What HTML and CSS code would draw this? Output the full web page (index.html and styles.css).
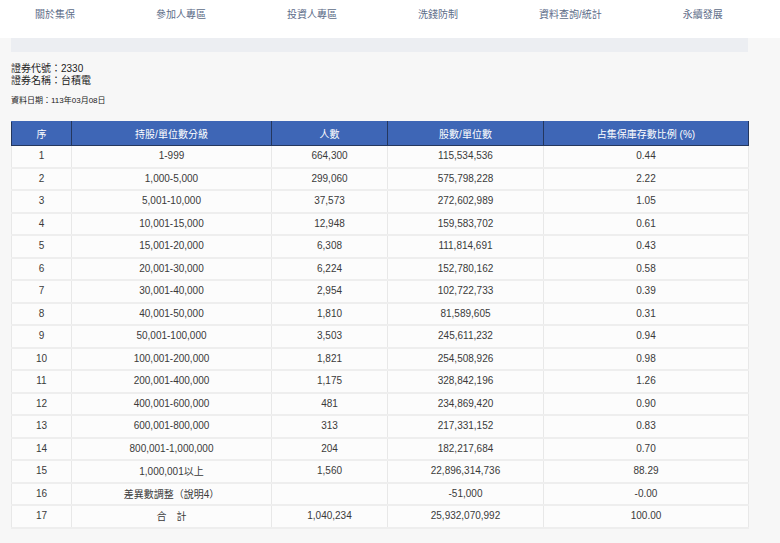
FILE: index.html
```html
<!DOCTYPE html>
<html lang="zh-Hant">
<head>
<meta charset="utf-8">
<title>集保戶股權分散表</title>
<link rel="stylesheet" href="styles.css">
</head>
<body>
<nav class="nav">
  <a class="nav-item">關於集保</a>
  <a class="nav-item">參加人專區</a>
  <a class="nav-item">投資人專區</a>
  <a class="nav-item">洗錢防制</a>
  <a class="nav-item">資料查詢/統計</a>
  <a class="nav-item">永續發展</a>
</nav>
<main class="content">
  <div class="strip"></div>
  <div class="info">
    <div>證券代號：2330</div>
    <div>證券名稱：台積電</div>
  </div>
  <div class="date">資料日期：113年03月08日</div>
  <table class="grid">
    <colgroup>
      <col class="c1"><col class="c2"><col class="c3"><col class="c4"><col class="c5">
    </colgroup>
    <thead>
      <tr><th>序</th><th>持股/單位數分級</th><th>人數</th><th>股數/單位數</th><th>占集保庫存數比例 (%)</th></tr>
    </thead>
    <tbody>
      <tr><td>1</td><td>1-999</td><td>664,300</td><td>115,534,536</td><td>0.44</td></tr>
      <tr><td>2</td><td>1,000-5,000</td><td>299,060</td><td>575,798,228</td><td>2.22</td></tr>
      <tr><td>3</td><td>5,001-10,000</td><td>37,573</td><td>272,602,989</td><td>1.05</td></tr>
      <tr><td>4</td><td>10,001-15,000</td><td>12,948</td><td>159,583,702</td><td>0.61</td></tr>
      <tr><td>5</td><td>15,001-20,000</td><td>6,308</td><td>111,814,691</td><td>0.43</td></tr>
      <tr><td>6</td><td>20,001-30,000</td><td>6,224</td><td>152,780,162</td><td>0.58</td></tr>
      <tr><td>7</td><td>30,001-40,000</td><td>2,954</td><td>102,722,733</td><td>0.39</td></tr>
      <tr><td>8</td><td>40,001-50,000</td><td>1,810</td><td>81,589,605</td><td>0.31</td></tr>
      <tr><td>9</td><td>50,001-100,000</td><td>3,503</td><td>245,611,232</td><td>0.94</td></tr>
      <tr><td>10</td><td>100,001-200,000</td><td>1,821</td><td>254,508,926</td><td>0.98</td></tr>
      <tr><td>11</td><td>200,001-400,000</td><td>1,175</td><td>328,842,196</td><td>1.26</td></tr>
      <tr><td>12</td><td>400,001-600,000</td><td>481</td><td>234,869,420</td><td>0.90</td></tr>
      <tr><td>13</td><td>600,001-800,000</td><td>313</td><td>217,331,152</td><td>0.83</td></tr>
      <tr><td>14</td><td>800,001-1,000,000</td><td>204</td><td>182,217,684</td><td>0.70</td></tr>
      <tr><td>15</td><td>1,000,001以上</td><td>1,560</td><td>22,896,314,736</td><td>88.29</td></tr>
      <tr><td>16</td><td>差異數調整<span class="paren">（</span>說明4<span class="paren">）</span></td><td></td><td>-51,000</td><td>-0.00</td></tr>
      <tr><td>17</td><td>合　計</td><td>1,040,234</td><td>25,932,070,992</td><td>100.00</td></tr>
    </tbody>
  </table>
</main>
</body>
</html>
```
FILE: styles.css
```css
html, body {
  margin: 0;
  padding: 0;
}
body {
  background: #f7f7f7;
  font-family: "Liberation Sans", Arial, "Noto Sans CJK TC", sans-serif;
  color: #333;
  font-size: 10px;
}
.nav {
  height: 38px;
  background: #fff;
  display: flex;
  align-items: flex-start;
  padding-left: 35px;
  gap: 81px;
  box-sizing: border-box;
  padding-top: 8px;
}
.nav-item {
  font-size: 10px;
  line-height: 13px;
  color: #5d6c88;
  white-space: nowrap;
}
.content {
  padding: 0 0 0 11px;
}
.strip {
  width: 737px;
  height: 14px;
  background: #eceef2;
}
.info {
  margin-top: 11px;
  font-size: 10px;
  line-height: 11.5px;
  color: #222;
}
.date {
  margin-top: 10px;
  font-size: 8px;
  line-height: 10px;
  color: #222;
}
.grid {
  margin-top: 14.5px;
  width: 737px;
  border-collapse: collapse;
  table-layout: fixed;
  font-size: 10px;
}
.c1 { width: 60px; }
.c2 { width: 200px; }
.c3 { width: 116px; }
.c4 { width: 156px; }
.c5 { width: 205px; }
.grid th {
  background: #3e66b6;
  color: #fff;
  font-weight: normal;
  height: 23px;
  padding: 0;
  border: 1px solid #24375e;
  border-top-color: #3e66b6;
  text-align: center;
  vertical-align: middle;
}
.grid td {
  background: #fcfcfc;
  height: 22.5px;
  padding: 0 0 1px;
  text-align: center;
  vertical-align: middle;
  color: #3a3a3a;
  border-left: 1px solid #e8e8e8;
  border-right: 1px solid #e8e8e8;
  border-bottom: 2px solid #eeeeee;
  box-sizing: border-box;
}
.paren {
  display: inline-block;
  width: 10px;
  text-align: center;
}
```
